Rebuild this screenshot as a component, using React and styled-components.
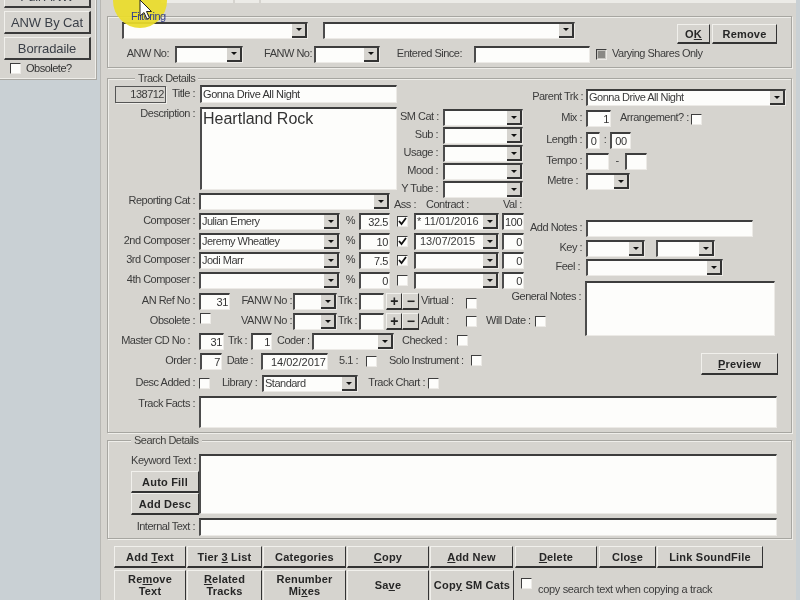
import React from "react";
import styled, { createGlobalStyle, css } from "styled-components";

const Global = createGlobalStyle`
  html, body { margin: 0; padding: 0; background: #c9d0d4; }
  * { box-sizing: border-box; }
`;

const place = css`
  flex: none;
  ${(p) => p.$w != null && `width: ${p.$w}px;`}
  ${(p) => p.$ml != null && `margin-left: ${p.$ml}px;`}
`;

const Screen = styled.div`
  position: relative;
  width: 800px;
  height: 600px;
  overflow: hidden;
  display: flex;
  background: #c9d0d4;
  font-family: "Liberation Sans", Arial, sans-serif;
  font-size: 11px;
  letter-spacing: -0.5px;
  color: #3c3c3c;
  filter: blur(0.35px);
`;

/* ---- sidebar ---- */
const Sidebar = styled.aside`
  width: 97px;
  flex: none;
`;
const SidePanel = styled.div`
  height: 80px;
  background: #d6d4cf;
  border-right: 1px solid #a9a8a3;
  border-bottom: 1px solid #a9a8a3;
  box-shadow: inset -1px -1px 0 #eeede9;
  padding: 0 0 0 4px;
  display: flex;
  flex-direction: column;
  gap: 3px;
`;
const SideButton = styled.div`
  width: 87px;
  height: 23px;
  margin-top: ${(p) => p.$mt || 0}px;
  display: flex;
  align-items: center;
  justify-content: center;
  font-size: 13px;
  letter-spacing: -0.1px;
  color: #3a3f47;
  background: #d6d4cf;
  border-top: 1px solid #f1f0ec;
  border-left: 1px solid #f1f0ec;
  border-right: 2px solid #3a3a3a;
  border-bottom: 2px solid #3a3a3a;
`;
const SideCheck = styled.div`
  display: flex;
  align-items: center;
  gap: 5px;
  margin: -1px 0 0 6px;
  color: #333;
`;

/* ---- main ---- */
const Main = styled.main`
  margin-left: 3px;
  width: 696px;
  height: 600px;
  flex: none;
  background: #d6d4cf;
  border-left: 1px solid #b9b8b4;
  padding-left: 6px;
  overflow: hidden;
`;
const TabEdge = styled.div`
  height: 3px;
  margin-left: -6px;
  background: linear-gradient(90deg, #d6d4cf 0 60px, #ecebe7 60px 132px, #d6d4cf 132px 134px, #ecebe7 134px 158px, #d6d4cf 158px 160px, #ecebe7 160px 100%);
`;
const Group = styled.section`
  position: relative;
  width: 685px;
  height: ${(p) => p.$h}px;
  margin-top: ${(p) => p.$mt}px;
  border: 1px solid #a7a6a1;
  box-shadow: inset 1px 1px 0 #efeeea, 1px 1px 0 #efeeea;
  padding: ${(p) => p.$pad};
`;
const Legend = styled.span`
  position: absolute;
  left: ${(p) => p.$x}px;
  top: -7px;
  padding: 0 3px;
  line-height: 13px;
  background: #d6d4cf;
  color: #40403e;
`;
const HighlightedLegend = styled(Legend)`
  z-index: 3;
  background: transparent;
  color: #333f8c;
`;
const Row = styled.div`
  display: flex;
  align-items: center;
  height: ${(p) => p.$h || 17}px;
  margin-top: ${(p) => p.$mt || 0}px;
`;
const Label = styled.span`
  ${place}
  text-align: ${(p) => p.$align || "right"};
  white-space: nowrap;
  line-height: 13px;
  padding-bottom: 2px;
  ${(p) => p.$top != null && `align-self: flex-start; margin-top: ${p.$top}px;`}
  ${(p) => p.$under != null && `align-self: flex-end; margin-bottom: ${p.$under}px;`}
`;
const sunken = css`
  background: #fdfdfb;
  border-top: 2px solid #3d3d3d;
  border-left: 2px solid #4c4c4c;
  border-right: 1px solid #eceae6;
  border-bottom: 1px solid #eceae6;
`;
const Field = styled.div`
  ${place}
  ${sunken}
  height: ${(p) => p.$h || 17}px;
  padding: ${(p) => (p.$big ? "0 1px" : "1px 1px 0")};
  text-align: ${(p) => p.$align || "left"};
  font-size: ${(p) => (p.$big ? 16 : 11)}px;
  letter-spacing: ${(p) => (p.$big || p.$plain ? "0" : "-0.4px")};
  line-height: ${(p) => (p.$big ? 20 : 13)}px;
  color: #333;
  white-space: nowrap;
  overflow: hidden;
`;
const ComboBox = styled.div`
  ${place}
  ${sunken}
  height: 17px;
  display: flex;
  align-items: stretch;
  justify-content: space-between;
  line-height: 13px;
  padding-left: 1px;
  white-space: nowrap;
  overflow: hidden;
`;
const DateText = styled.span`
  letter-spacing: 0;
  padding-left: ${(p) => p.$pad || 0}px;
`;
const ComboButton = styled.div`
  flex: none;
  width: 15px;
  display: flex;
  align-items: center;
  justify-content: center;
  background: #d6d4cf;
  border-right: 2px solid #333;
  border-bottom: 2px solid #333;
  &::after {
    content: "";
    border-left: 3px solid transparent;
    border-right: 3px solid transparent;
    border-top: 3px solid #111;
  }
`;
const Combo = ({ w, ml, children }) => (
  <ComboBox $w={w} $ml={ml}>
    <span>{children}</span>
    <ComboButton />
  </ComboBox>
);
const CheckBox = styled.div`
  ${place}
  width: 11px;
  height: 11px;
  ${(p) => p.$dy && `margin-top: ${p.$dy}px;`}
  border-top: 1px solid #3d3d3d;
  border-left: 1px solid #3d3d3d;
  border-right: 1px solid #eceae6;
  border-bottom: 1px solid #eceae6;
  background: ${(p) => (p.$mixed ? "#c6c5c0" : "#fdfdfb")};
  display: flex;
  align-items: center;
  justify-content: center;
  ${(p) =>
    p.$mixed &&
    `&::after { content: ""; width: 7px; height: 7px; background: #8a8985; }`}
`;
const Check = ({ ml, on, mixed, dy }) => (
  <CheckBox $ml={ml} $mixed={mixed} $dy={dy}>
    {on && (
      <svg width="9" height="9" viewBox="0 0 9 9">
        <path d="M1 4 L3.5 7 L8 1" fill="none" stroke="#111" strokeWidth="1.8" />
      </svg>
    )}
  </CheckBox>
);
const Button = styled.div`
  ${place}
  height: ${(p) => p.$h}px;
  display: flex;
  align-items: center;
  justify-content: center;
  text-align: center;
  font-weight: 700;
  line-height: 12px;
  letter-spacing: 0.2px;
  color: #262626;
  background: #d6d4cf;
  border-top: 1px solid #f1f0ec;
  border-left: 1px solid #f1f0ec;
  border-right: 1px solid #333;
  border-bottom: 2px solid #333;
  padding-bottom: ${(p) => p.$pb || 0}px;
  ${(p) => p.$top != null && `align-self: flex-start; margin-top: ${p.$top}px;`}
  u { text-underline-offset: 1px; }
`;

/* ---- track details layout ---- */
const Columns = styled.div`
  display: flex;
  height: 311px;
`;
const LeftColumn = styled.div`
  width: 390px;
  flex: none;
`;
const RightColumn = styled.div`
  width: 280px;
  flex: none;
`;
const TopBlock = styled.div`
  display: flex;
  height: 108px;
`;
const TitleBlock = styled.div`
  width: 282px;
  flex: none;
`;
const CatBlock = styled.div`
  flex: none;
  margin-left: 3px;
  padding-top: 24px;
  display: flex;
  flex-direction: column;
  gap: 1px;
`;
const IdBox = styled.div`
  width: 51px;
  height: 17px;
  flex: none;
  border: 1px solid #555;
  box-shadow: 1px 1px 0 #efeeea;
  text-align: right;
  padding-right: 1px;
  line-height: 15px;
`;
const PlusMinus = styled.div`
  ${place}
  width: ${(p) => p.$w}px;
  height: 17px;
  display: flex;
  align-items: center;
  justify-content: center;
  font-size: 14px;
  font-weight: 700;
  color: #222;
  background: #d6d4cf;
  border-top: 1px solid #f1f0ec;
  border-left: 1px solid #f1f0ec;
  border-right: 1px solid #333;
  border-bottom: 2px solid #333;
`;
const SearchBody = styled.div`
  display: flex;
`;
const SearchSide = styled.div`
  width: 91px;
  flex: none;
  display: flex;
  flex-direction: column;
  align-items: flex-end;
`;
const KeywordLabel = styled.span`
  line-height: 13px;
  margin: 0 3px 4px 0;
  white-space: nowrap;
`;
const ButtonRow = styled.div`
  display: flex;
  height: ${(p) => p.$h}px;
  margin-top: ${(p) => p.$mt}px;
  margin-left: 7px;
  align-items: stretch;
`;
const CopyCheck = styled.div`
  flex: none;
  margin-left: 7px;
  display: flex;
  align-items: flex-start;
  padding-top: 8px;
  gap: 6px;
  span { margin-top: 5px; line-height: 13px; white-space: nowrap; letter-spacing: -0.33px; }
`;
const Highlight = styled.div`
  position: absolute;
  z-index: 2;
  left: 113px;
  top: -26px;
  width: 54px;
  height: 54px;
  border-radius: 50%;
  background: #ebdd2b;
  opacity: 0.93;
  pointer-events: none;
`;
const Pointer = styled.svg`
  position: absolute;
  z-index: 4;
  left: 139px;
  top: -1px;
  pointer-events: none;
`;

const topButtons = [
  [72, 0, <>Add <u>T</u>ext</>],
  [75, 1, <>Tier <u>3</u> List</>],
  [83, 1, <>Cate<u>g</u>ories</>],
  [82, 1, <><u>C</u>opy</>],
  [83, 1, <><u>A</u>dd New</>],
  [82, 2, <><u>D</u>elete</>],
  [57, 2, <>Clo<u>s</u>e</>],
  [106, 1, "Link SoundFile"],
];
const lowerButtons = [
  [72, 0, <>Re<u>m</u>ove<br />Text</>],
  [75, 1, <><u>R</u>elated<br />Tracks</>],
  [83, 1, <>Renumber<br />Mi<u>x</u>es</>],
  [82, 1, <>Sa<u>v</u>e</>],
  [84, 1, <>Cop<u>y</u> SM Cats</>],
];
const composers = [
  ["Composer :", "Julian Emery", "32.5", true, "* 11/01/2016", 0, "100", 0],
  ["2nd Composer :", "Jeremy Wheatley", "10", true, "13/07/2015", 3, "0", 3],
  ["3rd Composer :", "Jodi Marr", "7.5", true, "", 0, "0", 2],
  ["4th Composer :", "", "0", false, "", 0, "0", 3],
];
const cats = ["SM Cat :", "Sub :", "Usage :", "Mood :", "Y Tube :"];

export default function App() {
  return (
    <Screen>
      <Global />
      <Sidebar>
        <SidePanel>
          <SideButton $mt={-15}>Full ANW</SideButton>
          <SideButton>ANW By Cat</SideButton>
          <SideButton>Borradaile</SideButton>
          <SideCheck>
            <Check />
            Obsolete?
          </SideCheck>
        </SidePanel>
      </Sidebar>
      <Main>
        <TabEdge />
        <Group $h={52} $mt={13} $pad="5px 0 0 14px">
          <HighlightedLegend $x={20}>Filtering</HighlightedLegend>
          <Row $h={16}>
            <Combo w={186} />
            <Combo w={252} ml={15} />
            <Button $w={33} $ml={102} $h={20} $top={2}>O<u>K</u></Button>
            <Button $w={65} $ml={2} $h={20} $top={2}>Remove</Button>
          </Row>
          <Row $h={16} $mt={8}>
            <Label $w={47}>ANW No:</Label>
            <Combo w={68} ml={6} />
            <Label $w={49} $ml={20}>FANW No:</Label>
            <Combo w={66} ml={2} />
            <Label $w={66} $ml={16}>Entered Since:</Label>
            <Field $w={116} $ml={12} />
            <Check ml={6} mixed />
            <Label $ml={5}>Varying Shares Only</Label>
          </Row>
        </Group>

        <Group $h={355} $mt={10} $pad="6px 0 0 7px">
          <Legend $x={27}>Track Details</Legend>
          <Columns>
            <LeftColumn>
              <TopBlock>
                <TitleBlock>
                  <Row $h={18}>
                    <IdBox>138712</IdBox>
                    <Label $w={29}>Title :</Label>
                    <Field $w={197} $ml={5} $h={18}>Gonna Drive All Night</Field>
                  </Row>
                  <Row $h={83} $mt={4}>
                    <Label $w={80} $top={0}>Description :</Label>
                    <Field $w={197} $ml={5} $h={83} $big>Heartland Rock</Field>
                  </Row>
                </TitleBlock>
                <CatBlock>
                  {cats.map((c) => (
                    <Row $h={17} key={c}>
                      <Label $w={38}>{c}</Label>
                      <Combo w={80} ml={5} />
                    </Row>
                  ))}
                </CatBlock>
              </TopBlock>
              <Row>
                <Label $w={80}>Reporting Cat :</Label>
                <Combo w={191} ml={4} />
                <Label $w={20} $ml={4} $under={-3} $align="left">Ass :</Label>
                <Label $w={50} $ml={12} $under={-3} $align="left">Contract :</Label>
                <Label $w={24} $ml={27} $under={-3} $align="left">Val :</Label>
              </Row>
              {composers.map(([label, name, pct, on, date, pad, val, gap], i) => (
                <Row key={label} $mt={i === 0 ? 3 : gap}>
                  <Label $w={80}>{label}</Label>
                  <Combo w={141} ml={4}>{name}</Combo>
                  <Label $w={10} $ml={5}>%</Label>
                  <Field $w={31} $ml={4} $align="right">{pct}</Field>
                  <Check ml={7} on={on} />
                  <Combo w={85} ml={6}><DateText $pad={pad}>{date}</DateText></Combo>
                  <Field $w={22} $ml={3} $align="right">{val}</Field>
                </Row>
              ))}
              <Row $mt={4}>
                <Label $w={80}>AN Ref No :</Label>
                <Field $w={31} $ml={4} $align="right">31</Field>
                <Label $w={62}>FANW No :</Label>
                <Combo w={44} ml={1} />
                <Label $w={20}>Trk :</Label>
                <Field $w={25} $ml={2} />
                <PlusMinus $w={16} $ml={2}>+</PlusMinus>
                <PlusMinus $w={17}>−</PlusMinus>
                <Label $w={34} $ml={2} $align="left">Virtual :</Label>
                <Check ml={11} dy={4} />
              </Row>
              <Row $mt={3}>
                <Label $w={80}>Obsolete :</Label>
                <Check ml={5} dy={-6} />
                <Label $w={81}>VANW No :</Label>
                <Combo w={44} ml={1} />
                <Label $w={20}>Trk :</Label>
                <Field $w={25} $ml={2} />
                <PlusMinus $w={16} $ml={2}>+</PlusMinus>
                <PlusMinus $w={17}>−</PlusMinus>
                <Label $w={34} $ml={2} $align="left">Adult :</Label>
                <Check ml={11} dy={-1} />
                <Label $w={42} $ml={9}>Will Date :</Label>
                <Check ml={7} dy={-1} />
              </Row>
              <Row $mt={3}>
                <Label $w={75}>Master CD No :</Label>
                <Field $w={25} $ml={9} $align="right">31</Field>
                <Label $w={19} $ml={4}>Trk :</Label>
                <Field $w={21} $ml={4} $align="right">1</Field>
                <Label $w={32} $ml={5}>Coder :</Label>
                <Combo w={82} ml={3} />
                <Label $w={46} $ml={7}>Checked :</Label>
                <Check ml={10} dy={-3} />
              </Row>
              <Row $mt={3}>
                <Label $w={81}>Order :</Label>
                <Field $w={22} $ml={4} $align="right">7</Field>
                <Label $w={27} $ml={4}>Date :</Label>
                <Field $w={67} $ml={8} $align="right" $plain>14/02/2017</Field>
                <Label $w={20} $ml={10}>5.1 :</Label>
                <Check ml={8} />
                <Label $w={74} $ml={12}>Solo Instrument :</Label>
                <Check ml={8} dy={-2} />
              </Row>
              <Row $mt={5}>
                <Label $w={80}>Desc Added :</Label>
                <Check ml={4} />
                <Label $w={35} $ml={12}>Library :</Label>
                <Combo w={96} ml={5}>Standard</Combo>
                <Label $w={59} $ml={8}>Track Chart :</Label>
                <Check ml={3} />
              </Row>
            </LeftColumn>
            <RightColumn>
              <Row $mt={4}>
                <Label $w={78}>Parent Trk :</Label>
                <Combo w={200} ml={3}>Gonna Drive All Night</Combo>
              </Row>
              <Row $mt={4}>
                <Label $w={77}>Mix :</Label>
                <Field $w={25} $ml={4} $align="right">1</Field>
                <Label $w={68} $ml={9}>Arrangement? :</Label>
                <Check ml={3} dy={2} />
              </Row>
              <Row $mt={5}>
                <Label $w={77}>Length :</Label>
                <Field $w={14} $ml={4} $align="center">0</Field>
                <Label $w={10} $align="center">:</Label>
                <Field $w={21} $align="center">00</Field>
              </Row>
              <Row $mt={4}>
                <Label $w={77}>Tempo :</Label>
                <Field $w={23} $ml={4} />
                <Label $w={16} $align="center">-</Label>
                <Field $w={22} />
              </Row>
              <Row $mt={3}>
                <Label $w={73}>Metre :</Label>
                <Combo w={44} ml={8} />
              </Row>
              <Row $mt={30}>
                <Label $w={77}>Add Notes :</Label>
                <Field $w={167} $ml={4} />
              </Row>
              <Row $mt={3}>
                <Label $w={77}>Key :</Label>
                <Combo w={59} ml={4} />
                <Combo w={59} ml={11} />
              </Row>
              <Row $mt={2}>
                <Label $w={75}>Feel :</Label>
                <Combo w={137} ml={6} />
              </Row>
              <Row $h={55} $mt={5}>
                <Label $w={76} $top={9}>General Notes :</Label>
                <Field $w={190} $ml={4} $h={55} />
              </Row>
              <Row $h={22} $mt={17}>
                <Button $w={77} $ml={196} $h={22}><span><u>P</u>review</span></Button>
              </Row>
            </RightColumn>
          </Columns>
          <Row $h={32}>
            <Label $w={80} $top={1}>Track Facts :</Label>
            <Field $w={578} $ml={4} $h={32} />
          </Row>
        </Group>

        <Group $h={99} $mt={7} $pad="13px 0 0 0">
          <Legend $x={23}>Search Details</Legend>
          <SearchBody>
            <SearchSide>
              <KeywordLabel>Keyword Text :</KeywordLabel>
              <Button $w={68} $h={22}>Auto Fill</Button>
              <Button $w={68} $h={22} $ml={0}>Add Desc</Button>
            </SearchSide>
            <Field $w={578} $h={60} />
          </SearchBody>
          <Row $h={18} $mt={3}>
            <Label $w={87}>Internal Text :</Label>
            <Field $w={578} $ml={4} $h={18} />
          </Row>
        </Group>

        <ButtonRow $h={22} $mt={7}>
          {topButtons.map(([w, ml, text], i) => (
            <Button key={i} $w={w} $ml={ml} $h={22}><span>{text}</span></Button>
          ))}
        </ButtonRow>
        <ButtonRow $h={33} $mt={2}>
          {lowerButtons.map(([w, ml, text], i) => (
            <Button key={i} $w={w} $ml={ml} $h={33} $pb={3}><span>{text}</span></Button>
          ))}
          <CopyCheck>
            <Check />
            <span>copy search text when copying a track</span>
          </CopyCheck>
        </ButtonRow>
      </Main>
      <Highlight />
      <Pointer width="14" height="22" viewBox="0 0 14 22">
        <path d="M1 1 L1 17 L5 13.5 L8 20 L10.5 19 L7.5 12.5 L12.5 12.5 Z" fill="#fff" stroke="#222" strokeWidth="1" />
      </Pointer>
    </Screen>
  );
}
